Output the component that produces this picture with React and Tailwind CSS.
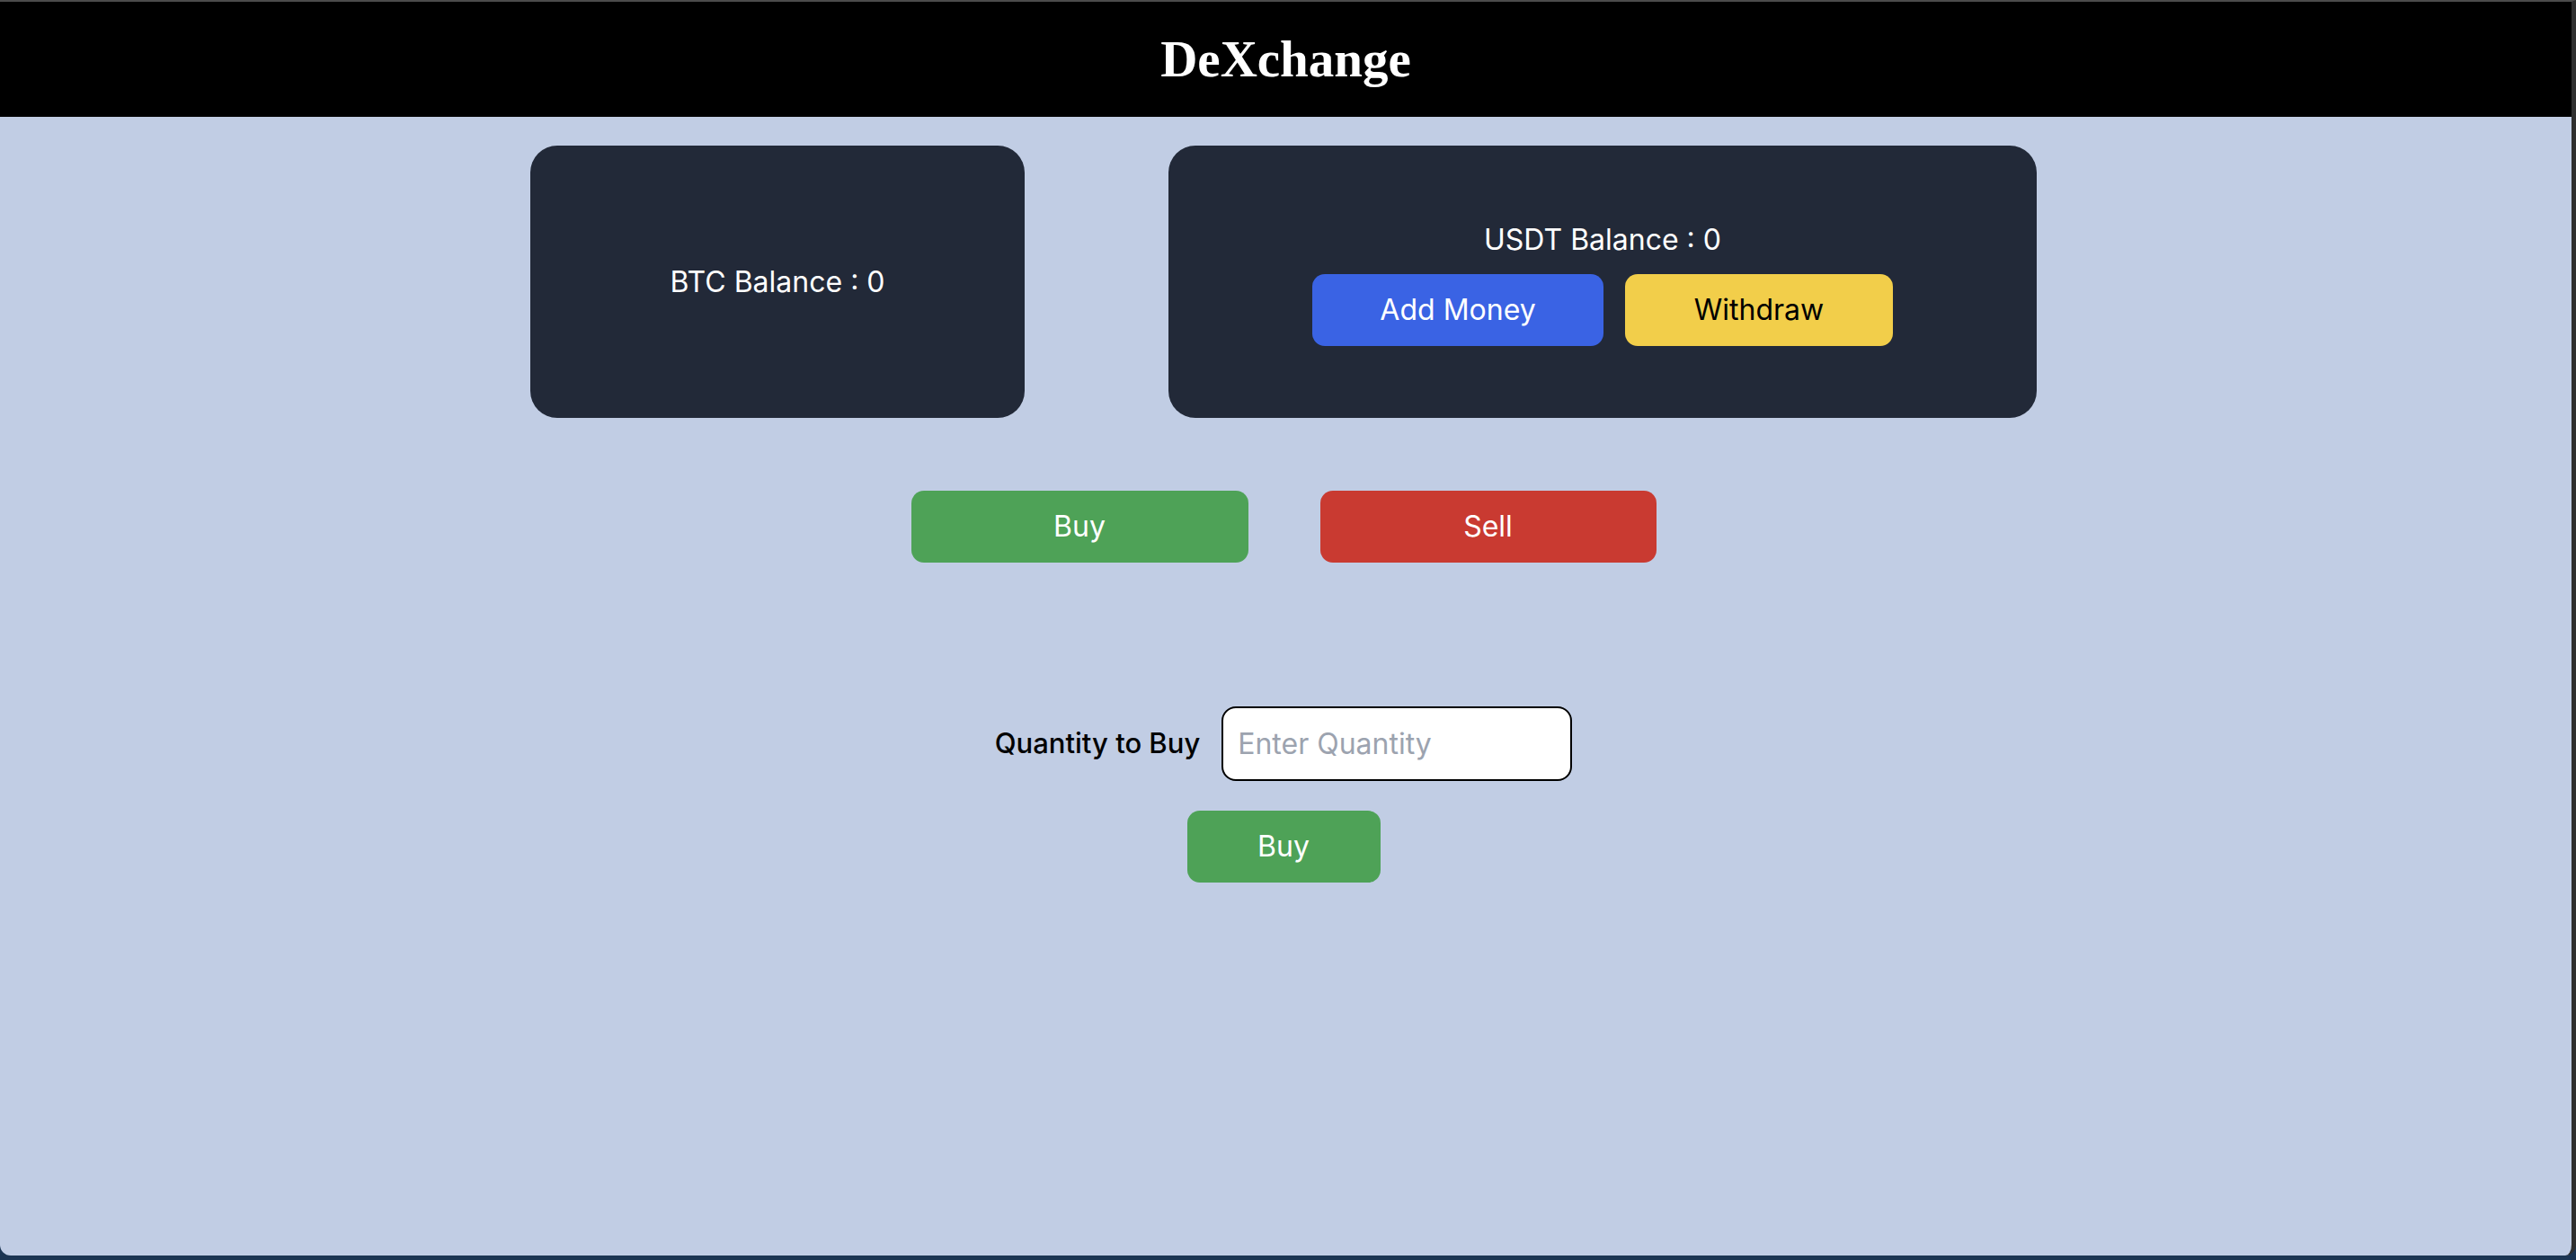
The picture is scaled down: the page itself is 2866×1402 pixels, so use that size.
const btn = "h-[80px] rounded-[14px] text-[32px] leading-[48px] flex items-center justify-center";

const App = () => {
  return (
    <div className="h-[1402px] bg-[#1c3552] font-['Inter','Liberation_Sans',sans-serif]">
      <div className="h-[1397px] flex flex-col bg-[#c1cde4] border-t-2 border-t-[#4b4b4b] border-r-[5px] border-r-[#2f2f2f] rounded-b-[12px] overflow-hidden">
        <header className="h-[128px] shrink-0 bg-black flex items-center justify-center">
          <h1 className="text-white text-[57px] font-bold font-['Liberation_Serif',serif] leading-none -mt-[2px]">DeXchange</h1>
        </header>

        <main className="flex flex-col items-center pt-[32px] pr-[5px]">
          <div className="flex gap-[160px]">
            <div className="w-[550px] h-[303px] rounded-[30px] bg-[#222938] flex items-center justify-center text-white text-[32px]">
              BTC Balance : 0
            </div>
            <div className="w-[966px] h-[303px] rounded-[30px] bg-[#222938] flex flex-col items-center justify-center text-white">
              <p className="text-[32px] leading-[48px]">USDT Balance : 0</p>
              <div className="flex gap-[24px] mt-[14px]">
                <button className={`${btn} w-[324px] bg-[#3a63e4] text-white`}>Add Money</button>
                <button className={`${btn} w-[298px] bg-[#f2ce4a] text-black`}>Withdraw</button>
              </div>
            </div>
          </div>

          <div className="flex gap-[80px] mt-[81px]">
            <button className={`${btn} w-[375px] bg-[#4ea257] text-white`}>Buy</button>
            <button className={`${btn} w-[374px] bg-[#c93a31] text-white`}>Sell</button>
          </div>

          <div className="flex items-center gap-[24px] mt-[160px]">
            <label className="text-[31px] text-black font-medium">Quantity to Buy</label>
            <input
              type="text"
              placeholder="Enter Quantity"
              className="w-[390px] h-[83px] bg-white border-2 border-black rounded-[16px] px-[16px] text-[32px] placeholder:text-[#9ca3af] outline-none"
            />
          </div>
          <button className={`${btn} mt-[33px] w-[215px] bg-[#4ea257] text-white`}>Buy</button>
        </main>
      </div>
    </div>
  );
};

export default App;
